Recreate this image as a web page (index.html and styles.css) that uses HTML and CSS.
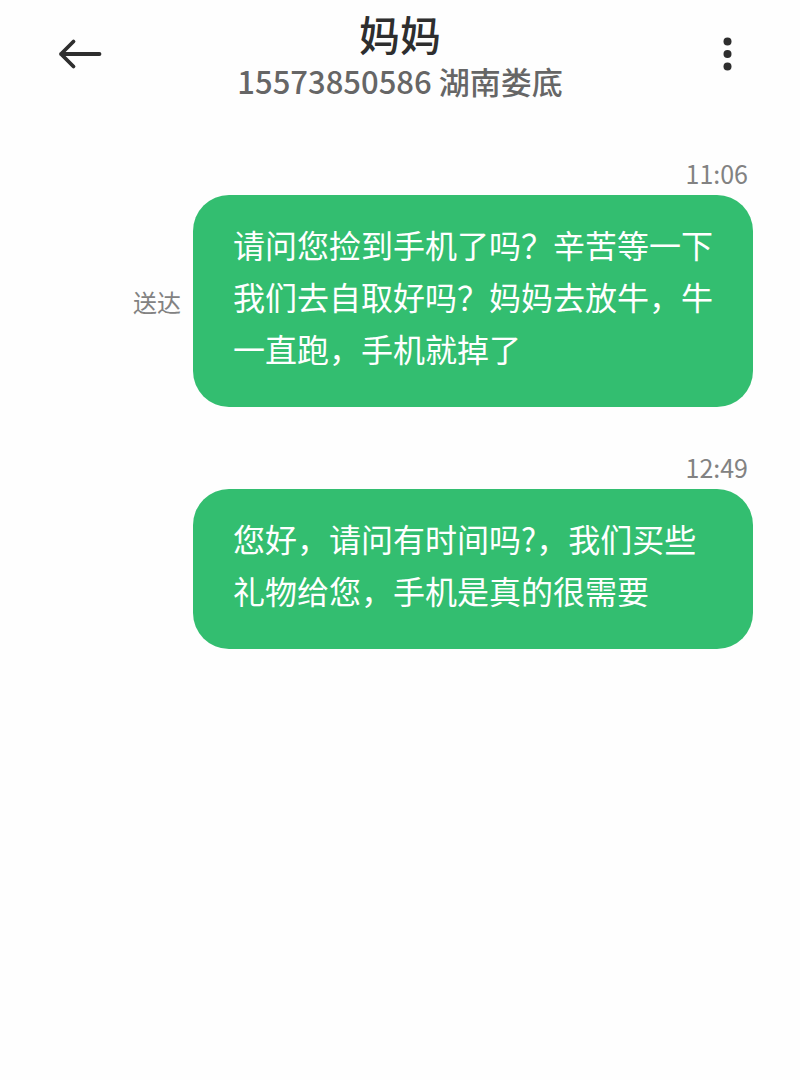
FILE: index.html
```
<!DOCTYPE html>
<html lang="zh-CN">
<head>
    <meta charset="UTF-8">
    <meta name="viewport" content="width=device-width, initial-scale=1.0">
    <title>妈妈</title>
    <link rel="stylesheet" href="styles.css">
</head>
<body>
    <header class="chat-header">
        <button type="button" class="icon-btn" aria-label="返回">
            <svg width="44" height="32" viewBox="0 0 44 32" fill="none" stroke="#2e2e2e" stroke-width="3.8" stroke-linecap="round" stroke-linejoin="round">
                <path d="M3 16H41.5M15.5 3.5L3 16L15.5 28.5"/>
            </svg>
        </button>
        <div class="contact">
            <h1>妈妈</h1>
            <p>15573850586 湖南娄底</p>
        </div>
        <button type="button" class="icon-btn" aria-label="更多">
            <svg width="44" height="36" viewBox="0 0 44 36" fill="#2e2e2e">
                <circle cx="29.5" cy="5.5" r="4"/>
                <circle cx="29.5" cy="18" r="4"/>
                <circle cx="29.5" cy="30.5" r="4"/>
            </svg>
        </button>
    </header>

    <main class="messages">
        <!-- Delivered message -->
        <div class="message">
            <time class="time">11:06</time>
            <div class="message-row">
                <span class="status">送达</span>
                <p class="bubble">请问您捡到手机了吗？辛苦等一下我们去自取好吗？妈妈去放牛，牛一直跑，手机就掉了</p>
            </div>
        </div>

        <div class="message">
            <time class="time">12:49</time>
            <div class="message-row">
                <p class="bubble">您好，请问有时间吗?，我们买些礼物给您，手机是真的很需要</p>
            </div>
        </div>
    </main>
</body>
</html>
```
FILE: styles.css
```
/* General Styles */
* {
    box-sizing: border-box;
}

body {
    font-family: "Noto Sans CJK SC", sans-serif;
    background: #fefefe;
    margin: 0;
    color: #2e2e2e;
}

h1,
p {
    margin: 0;
}

/* Header */
.chat-header {
    display: flex;
    justify-content: space-between;
    align-items: center;
    padding: 6px 58px 0;
}

.icon-btn {
    display: flex;
    padding: 0;
    border: none;
    background: none;
    cursor: pointer;
}

.contact {
    text-align: center;
}

.contact h1 {
    font-size: 41px;
    font-weight: 500;
    line-height: 54px;
}

.contact p {
    font-size: 31px;
    font-weight: 500;
    line-height: 42px;
    color: #666;
}

/* Messages */
.messages {
    display: flex;
    flex-direction: column;
    gap: 44px;
    padding: 55px 47px 40px;
}

.message {
    display: flex;
    flex-direction: column;
}

.time {
    align-self: flex-end;
    padding: 0 5px 6px 0;
    font-size: 25px;
    line-height: 32px;
    color: #828282;
}

.message-row {
    display: flex;
    justify-content: flex-end;
    align-items: center;
    gap: 12px;
}

.status {
    flex-shrink: 0;
    font-size: 24px;
    color: #828282;
}

.bubble {
    max-width: 560px;
    padding: 23px 38px 33px 40px;
    border-radius: 36px;
    background: #33be70;
    color: #fff;
    font-size: 32px;
    line-height: 52px;
}
```
